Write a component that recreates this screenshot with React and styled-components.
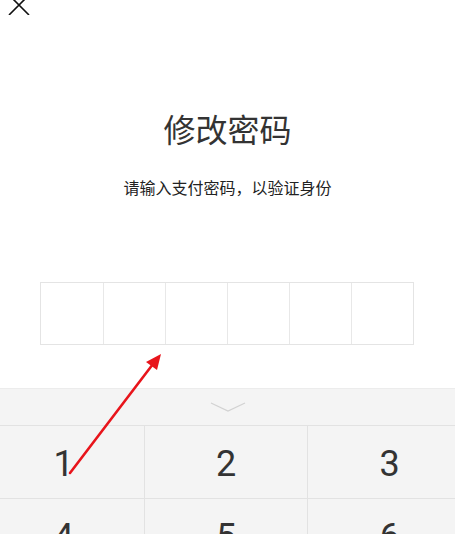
import React from "react";
import styled, { createGlobalStyle } from "styled-components";

const Global = createGlobalStyle`
  html, body { margin: 0; padding: 0; background: #fff; }
  body { font-family: "Noto Sans CJK SC", "Noto Sans", sans-serif; }
  * { box-sizing: border-box; }
`;

const Page = styled.div`
  position: relative;
  width: 455px;
  height: 534px;
  overflow: hidden;
  display: flex;
  flex-direction: column;
  background: #fff;
  & > * { flex-shrink: 0; }
`;

const TopBar = styled.div`
  height: 15px;
  padding-left: 8px;
  display: flex;
  align-items: flex-start;
`;

const Title = styled.h1`
  margin: 91px 0 0;
  font-size: 32px;
  line-height: 44px;
  font-weight: 400;
  color: #333;
  text-align: center;
`;

const Subtitle = styled.p`
  margin: 25px 0 0;
  font-size: 16px;
  line-height: 24px;
  color: #222;
  text-align: center;
`;

const PinBox = styled.div`
  margin: 83px 0 0 40px;
  width: 374px;
  height: 63px;
  display: grid;
  grid-template-columns: repeat(6, 1fr);
  border: 1px solid #e4e4e4;
`;

const PinCell = styled.div`
  border-left: ${(p) => (p.$first ? "none" : "1px solid #e8e8e8")};
`;

const Keyboard = styled.div`
  margin-top: 43px;
  background: #f4f4f4;
  border-top: 1px solid #ececec;
  display: flex;
  flex-direction: column;
`;

const KbHeader = styled.div`
  height: 37px;
  display: flex;
  align-items: center;
  justify-content: center;
  border-bottom: 1px solid #e2e2e2;
`;

const KeyGrid = styled.div`
  margin-left: -17px;
  width: 488px;
  display: grid;
  grid-template-columns: 162px 163px 163px;
  grid-auto-rows: 73px;
`;

const Key = styled.div`
  display: flex;
  align-items: center;
  justify-content: center;
  font-family: Roboto, "Noto Sans", sans-serif;
  font-size: 36px;
  color: #333;
  border-right: ${(p) => (p.$last ? "none" : "1px solid #e2e2e2")};
  border-bottom: 1px solid #e2e2e2;
  padding-top: 3px;
`;

const Annotation = styled.svg`
  position: absolute;
  left: 0;
  top: 0;
  pointer-events: none;
`;

export default function App() {
  const keys = ["1", "2", "3", "4", "5", "6"];
  return (
    <Page>
      <Global />
      <TopBar>
        <svg width="22" height="15" viewBox="0 0 22 15">
          <path d="M1 -5 L21 15 M21 -5 L1 15" stroke="#111" strokeWidth="1.6" fill="none" />
        </svg>
      </TopBar>
      <Title>修改密码</Title>
      <Subtitle>请输入支付密码，以验证身份</Subtitle>
      <PinBox>
        {[0, 1, 2, 3, 4, 5].map((i) => (
          <PinCell key={i} $first={i === 0} />
        ))}
      </PinBox>
      <Keyboard>
        <KbHeader>
          <svg width="36" height="10" viewBox="0 0 36 10">
            <path d="M1 1 L18 9 L35 1" stroke="#d2d2d2" strokeWidth="1.3" fill="none" />
          </svg>
        </KbHeader>
        <KeyGrid>
          {keys.map((k, i) => (
            <Key key={k} $last={i % 3 === 2}>{k}</Key>
          ))}
        </KeyGrid>
      </Keyboard>
      <Annotation width="455" height="534" viewBox="0 0 455 534">
        <line x1="70" y1="473" x2="153" y2="364" stroke="#e8141b" strokeWidth="2.6" strokeLinecap="round" />
        <path d="M161 354 L146 362 L157 370 Z" fill="#e8141b" />
      </Annotation>
    </Page>
  );
}
